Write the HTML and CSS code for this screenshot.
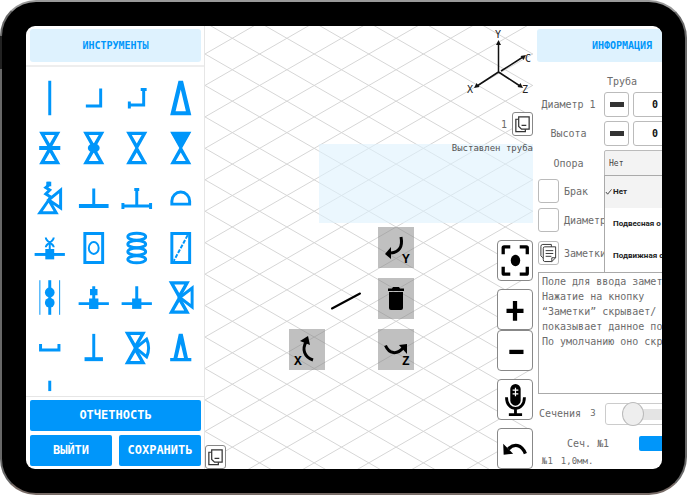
FILE: index.html
```html
<!DOCTYPE html>
<html lang="ru">
<head>
<meta charset="utf-8">
<meta name="viewport" content="width=device-width, initial-scale=1">
<title>Инструменты</title>
<link rel="stylesheet" href="styles.css">
</head>
<body>
<svg class="defs" aria-hidden="true">
  <symbol id="valve" viewBox="-22 -25 44 50"><path class="f" fill-rule="evenodd" d="M-10.7-16.5H10.7L1.5 0L10.7 16.5H-10.7L-1.5 0ZM-5-13.2H5L0-4.5ZM-5 13.2H5L0 4.5Z"/></symbol>
  <symbol id="copy" viewBox="0 0 20 22"><path fill="#fff" stroke="#333" stroke-width="1.3" d="M3 6h10v13H3Z"/><path fill="#fff" stroke="#333" stroke-width="1.3" d="M6 3.5h11v13H9l-3-3ZM9 12.5h5"/></symbol>
</svg>
<div class="device">
<main class="screen">
  <section class="tools">
    <h2 class="title">ИНСТРУМЕНТЫ</h2>
    <div class="palette">
      <button aria-label="Труба"><svg viewBox="-22 -25 44 50"><path class="s" d="M0-17.5V17.5"/></svg></button>
      <button aria-label="Отвод"><svg viewBox="-22 -25 44 50"><path class="s" d="M7-9.5V8H-8"/></svg></button>
      <button aria-label="Отвод с фланцами"><svg viewBox="-22 -25 44 50"><path class="s" d="M7-9.5V7H-9M4-8.5H10M-7.5 3.5V10.5"/></svg></button>
      <button aria-label="Конус"><svg viewBox="-22 -25 44 50"><path class="f" fill-rule="evenodd" d="M-2.3-17.5H2.3L10.7 17.5H-10.7ZM0-8.5L5.2 13.3H-5.2Z"/></svg></button>

      <button aria-label="Задвижка"><svg viewBox="-22 -25 44 50"><use href="#valve" x="-22" y="-25" width="44" height="50"/><path class="s w4" d="M-10.7 0H10.7"/></svg></button>
      <button aria-label="Шаровой кран"><svg viewBox="-22 -25 44 50"><use href="#valve" x="-22" y="-25" width="44" height="50"/><ellipse class="f" rx="6" ry="4.8"/></svg></button>
      <button aria-label="Вентиль"><svg viewBox="-22 -25 44 50"><use href="#valve" x="-22" y="-25" width="44" height="50"/></svg></button>
      <button aria-label="Обратный клапан"><svg viewBox="-22 -25 44 50"><use href="#valve" x="-22" y="-25" width="44" height="50"/><path class="f" d="M-10-16H10L0 1Z"/></svg></button>

      <button aria-label="Предохранительный клапан"><svg viewBox="-22 -25 44 50"><path class="s" d="M-1 2L-10 15H6.5ZM-1 2L11-8V10Z"/><path class="s" d="M-1-16.5V-13L-4-10.500L0-8L-4-4L1-1L-1 2"/><path class="f" d="M-3.5-16.5H1.5V-12H-3.5Z"/></svg></button>
      <button aria-label="Тройник"><svg viewBox="-22 -25 44 50"><path class="s w4" d="M-15 8H15"/><path class="s" d="M0-9.5V8"/></svg></button>
      <button aria-label="Тройник с фланцами"><svg viewBox="-22 -25 44 50"><path class="s" d="M-15 8H15M0-10V8M-2.5-8.5H2.5M-14 5V11M14 5V11"/></svg></button>
      <button aria-label="Заглушка"><svg viewBox="-22 -25 44 50"><path class="s" d="M-9 6.2V3A9 9 0 0 1 9 3V6.2Z"/></svg></button>

      <button aria-label="Врезка"><svg viewBox="-22 -25 44 50"><path class="s" d="M-15.3 6.5H15.3"/><path class="f" d="M-4.5 1H4.5V11.5H-4.5Z"/><path class="s w2" d="M-4-10.7C-4-6 4-5 4-.7M4-10.7C4-6-4-5-4-.7M0-6V2"/></svg></button>
      <button aria-label="Фильтр"><svg viewBox="-22 -25 44 50"><path class="s" d="M-9-14.7H9V14.7H-9Z"/><ellipse class="s w2" rx="5" ry="6"/></svg></button>
      <button aria-label="Компенсатор"><svg viewBox="-22 -25 44 50"><g class="s"><ellipse cy="-11.4" rx="9" ry="3.6"/><ellipse cy="-3.9" rx="9" ry="3.6"/><ellipse cy="3.7" rx="9" ry="3.6"/><ellipse cy="11.4" rx="9" ry="3.6"/></g></svg></button>
      <button aria-label="Сетка"><svg viewBox="-22 -25 44 50"><path class="s" d="M-9-14.7H9V14.7H-9Z"/><path class="s w2" stroke-dasharray="4 1.5" d="M7-13L-7 13"/></svg></button>

      <button aria-label="Диафрагма"><svg viewBox="-22 -25 44 50"><path class="s w1" d="M-10-18V17M10-18V17"/><path class="s" d="M0-18V17"/><circle class="f" cy="-5.6" r="4.9"/><circle class="f" cy="4.8" r="4.9"/></svg></button>
      <button aria-label="Штуцер с бобышкой"><svg viewBox="-22 -25 44 50"><path class="s" d="M-15.3 5.7H15.3M0-12V1"/><path class="f" d="M-4.7 .5H4.7V11H-4.7ZM-3.8-9H3.8V-2.7H-3.8Z"/></svg></button>
      <button aria-label="Штуцер"><svg viewBox="-22 -25 44 50"><path class="s" d="M-15.3 5.7H15.3M0-12V1"/><path class="f" d="M-4.7 .5H4.7V11H-4.7Z"/></svg></button>
      <button aria-label="Трехходовой кран"><svg viewBox="-22 -25 44 50"><use href="#valve" x="-23.5" y="-25.5" width="44" height="50"/><path class="s" d="M-1-.5L11.5-10V9Z"/></svg></button>

      <button aria-label="Опора"><svg viewBox="-22 -25 44 50"><path class="s" d="M-9.3-4V2H9.3V-4"/></svg></button>
      <button aria-label="Стойка"><svg viewBox="-22 -25 44 50"><path class="s" d="M0-14.3V11"/><path class="s w4" d="M-9.3 11.3H9.3"/></svg></button>
      <button aria-label="Регулирующий клапан"><svg viewBox="-22 -25 44 50"><use href="#valve" x="-23.5" y="-25" width="44" height="50"/><path class="s" d="M-1 0L10-9Q14 0 10 9Z"/></svg></button>
      <button aria-label="Конусная опора"><svg viewBox="-22 -25 44 50"><path class="f" fill-rule="evenodd" d="M-2-14.3H2L7.3 10H10.7V13.5H-10.7V10H-7.3ZM0-4L3.3 10H-3.3Z"/></svg></button>

      <button aria-label="Штырь"><svg viewBox="-22 -25 44 50"><path class="s" d="M0-17.5V-7"/></svg></button>
    </div>
    <div class="actions">
      <button class="primary wide">ОТЧЕТНОСТЬ</button>
      <button class="primary">ВЫЙТИ</button>
      <button class="primary">СОХРАНИТЬ</button>
    </div>
  </section>

  <section class="canvas">
    <svg class="mesh" aria-hidden="true">
      <defs>
        <path id="down" d="M0 0l1092 629m-1092-597.550l1092 629m-1092-597.550l1092 629m-1092-597.550l1092 629m-1092-597.550l1092 629m-1092-597.550l1092 629m-1092-597.550l1092 629m-1092-597.550l1092 629"/>
        <path id="up" d="M0 0l1092-629m-1092 660.450l1092-629m-1092 660.450l1092-629m-1092 660.450l1092-629m-1092 660.450l1092-629m-1092 660.450l1092-629m-1092 660.450l1092-629m-1092 660.450l1092-629"/>
      </defs>
      <g fill="none" stroke="#d6d6d6">
        <use href="#down" y="-475.200"/><use href="#down" y="-223.600"/><use href="#down" y="28"/><use href="#down" y="279.600"/><use href="#down" y="531.200"/>
        <use href="#up" y="28"/><use href="#up" y="279.600"/><use href="#up" y="531.200"/><use href="#up" y="782.800"/><use href="#up" y="1034.400"/>
      </g>
    </svg>
    <svg class="pipe" viewBox="0 0 30 18" aria-hidden="true"><path d="M1 16.5L29 1.5" stroke="#000" stroke-width="2" stroke-linecap="round"/></svg>
    <div class="message">Выставлен труба</div>
    <svg class="axes" viewBox="0 0 68 68" aria-hidden="true">
      <path d="M31.500 45V18M31.500 45L10 59M31.500 45L53 59M34 44L56 30" fill="none" stroke="#111" stroke-width="1.5"/>
      <path fill="#111" d="M31.500 13L34 18H29ZM7 61L9.500 56L12.500 60ZM56 61L50.500 60L53.500 56ZM59 28L56.500 33L53.500 29Z"/>
      <g class="axis-text"><text x="28" y="11">Y</text><text x="0" y="66">X</text><text x="55" y="66">Z</text><text x="58" y="35">C</text></g>
    </svg>
    <div class="layer"><span>1</span><button class="small" aria-label="Копировать"><svg viewBox="0 0 20 22"><use href="#copy"/></svg></button></div>

    <button class="node rot-y" aria-label="Повернуть по Y"><svg viewBox="0 0 36 41"><path d="M23 10C25 20 21 25 13 26" fill="none" stroke="#000" stroke-width="3"/><path d="M7 27L13 20V32Z"/><text x="24" y="36">Y</text></svg></button>
    <button class="node bin" aria-label="Удалить"><svg viewBox="0 0 36 41"><path d="M10 10.500H14L15 9H21L22 10.500H26V13H10ZM11 14H25V30Q25 32 23 32H13Q11 32 11 30Z"/></svg></button>
    <button class="node rot-z" aria-label="Повернуть по Z"><svg viewBox="0 0 36 41"><path d="M7.500 16.500C11 25 19 26 25 19" fill="none" stroke="#000" stroke-width="3"/><path d="M21 16L29 15V25Z"/><text x="24" y="36">Z</text></svg></button>
    <button class="node rot-x" aria-label="Повернуть по X"><svg viewBox="0 0 36 41"><path d="M24 31C15 28 13 20 17 13" fill="none" stroke="#000" stroke-width="3"/><path d="M11 12L19 7L21 16Z"/><text x="5" y="36">X</text></svg></button>

    <div class="controls">
      <button aria-label="Центрировать"><svg viewBox="0 0 36 41"><path d="M5.500 14V7Q5.500 6 6.500 6H13M23 6H30Q31 6 31 7V14M31 27V34Q31 35 30 35H23M13 35H6.500Q5.500 35 5.500 34V27" fill="none" stroke="#000" stroke-width="3.500"/><ellipse cx="18.500" cy="20.500" rx="5" ry="6"/></svg></button>
      <div class="zoom">
        <button aria-label="Увеличить"><svg viewBox="0 0 36 41"><path d="M9 22H27M18 11.500V32.500" stroke="#000" stroke-width="4.500"/></svg></button>
        <button aria-label="Уменьшить"><svg viewBox="0 0 36 41"><path d="M12 22H27" stroke="#000" stroke-width="4.500"/></svg></button>
      </div>
      <button aria-label="Голосовой ввод"><svg viewBox="0 0 36 41"><rect x="13" y="4" width="11" height="23" rx="5.500"/><path d="M9 18C9 34 28 34 28 18M18.500 30V36M11.500 36.500H25.500" fill="none" stroke="#000" stroke-width="3"/><path d="M18.500 8V17M15.500 10.500H21.500M15.500 14.500H21.500" stroke="#fff" stroke-width="1.300"/></svg></button>
      <button aria-label="Отменить"><svg viewBox="0 0 36 41"><path d="M29 26C25 16 17 15 11 21" fill="none" stroke="#000" stroke-width="3.500"/><path d="M5.500 15.500L16 26L6 27Z"/></svg></button>
    </div>
    <button class="small corner" aria-label="Дублировать"><svg viewBox="0 0 20 22"><use href="#copy"/></svg></button>
  </section>

  <section class="info">
    <div class="sheet">
      <h2 class="title">ИНФОРМАЦИЯ</h2>
      <h3 class="kind">Труба</h3>
      <div class="row"><label for="dia">Диаметр 1</label><button class="step" aria-label="Меньше диаметр"></button><input class="num" id="dia" value="0"></div>
      <div class="row"><label for="hgt">Высота</label><button class="step" aria-label="Меньше высота"></button><input class="num" id="hgt" value="0"></div>
      <div class="row"><label for="sup">Опора</label>
        <div class="dropdown">
          <select id="sup"><option>Нет</option><option>Подвесная о</option><option>Подвижная о</option></select>
          <ul class="menu"><li class="on"><svg viewBox="0 0 8 8" aria-hidden="true"><path d="M1 4L3 6.500L7.500 1" fill="none" stroke="#333"/></svg>Нет</li><li>Подвесная о</li><li>Подвижная о</li></ul>
        </div>
      </div>
      <div class="check"><input type="checkbox" id="brak"><label for="brak">Брак</label></div>
      <div class="check"><input type="checkbox" id="d2"><label for="d2">Диаметр</label></div>
      <div class="check notes"><button id="nb" class="small" aria-label="Заметки"><svg viewBox="0 0 20 22"><path fill="#fff" stroke="#333" d="M2 14V4Q2 2 4 2H13V16H4Z"/><path fill="#fff" stroke="#333" d="M4.500 16V6Q4.500 4.500 6 4.500H17.500V16L13.500 20H6Q4.500 20 4.500 18ZM17.500 16H13.500V20M7 8.500H15M7 11.500H15M7 14.500H13"/></svg></button><label for="nb">Заметки</label></div>
      <textarea aria-label="Текст заметки">Поле для ввода заметок.
Нажатие на кнопку
“Заметки” скрывает/
показывает данное поле.
По умолчанию оно скрыто.</textarea>
      <div class="sections"><label for="sec">Сечения</label><output for="sec">3</output><input type="range" id="sec" min="0" max="14" value="3"></div>
      <div class="section-row"><span>Сеч. №1</span><button class="blue" aria-label="Изменить сечение"></button></div>
      <div class="size"><span>№1</span><span>1,0мм.</span></div>
    </div>
  </section>
</main>
</div>
</body>
</html>
```
FILE: styles.css
```css
* { box-sizing: border-box; }

body {
  margin: 0;
  background: #fff;
  color: #6c6c6c;
  font: 10px/15px "DejaVu Sans Mono", "Liberation Mono", monospace;
}

button, input, select, textarea { font: inherit; color: inherit; margin: 0; }
button { padding: 0; border: 0; background: none; display: block; }
button svg { display: block; width: 100%; height: 100%; }
h2, h3, ul { margin: 0; padding: 0; font: inherit; list-style: none; }
.defs { position: absolute; width: 0; height: 0; }

.device {
  position: relative;
  height: 100vh;
  padding: 24px 23px 24px 24px;
  background: #000;
  border: 2px solid #777;
  border-color: #999 #686868 #776b66 #686868;
  border-radius: 36px 38px 38px 36px;
}
/* side key */
.device::before {
  content: "";
  position: absolute;
  left: -2px;
  top: 34px;
  width: 2px;
  height: 33px;
  background: #222;
}

.screen {
  display: grid;
  grid-template-columns: 179px 1fr 129px;
  height: 100%;
  overflow: hidden;
  border-radius: 9px;
  background: #fff;
}

.title {
  height: 33px;
  border-radius: 3px;
  background: #def2fe;
  color: #0096fa;
  font-weight: 700;
  line-height: 33px;
  text-align: center;
}

/* Left panel */
.tools {
  display: flex;
  flex-direction: column;
  min-height: 0;
  border-right: 1px solid #e6e6e6;
}
.tools .title { margin: 3px 3px 3px 4px; flex: none; }
.palette {
  flex: 1;
  min-height: 0;
  overflow: hidden;
  display: grid;
  grid-template-columns: repeat(4, 1fr);
  grid-auto-rows: 50px;
  padding: 6px 2px 0;
  border-top: 2px solid #eee;
  border-bottom: 1px solid #e6e6e6;
}
.f { fill: #0096fa; }
.s { fill: none; stroke: #0096fa; stroke-width: 3; }
.w4 { stroke-width: 4; }
.w2 { stroke-width: 2; }
.w1 { stroke-width: 1; }

.actions {
  display: grid;
  grid-template-columns: 1fr 1fr;
  gap: 4px 7px;
  padding: 3px 3px 3px 4px;
}
.primary {
  height: 31px;
  border-radius: 2px;
  background: #0096fa;
  color: #fff;
  font-size: 12px;
  font-weight: 700;
}
.wide { grid-column: 1 / -1; }

/* Drawing area */
.canvas { position: relative; overflow: hidden; }
.mesh { position: absolute; inset: 0; width: 100%; height: 100%; }
.message {
  position: absolute;
  top: 118px;
  right: 0;
  width: 214px;
  height: 79px;
  background: rgba(222, 242, 254, .6);
  line-height: 8px;
  text-align: right;
  font-size: 9px;
  color: #555;
}
.axes { position: absolute; top: 1px; right: -2px; width: 68px; height: 68px; overflow: visible; }
.axis-text { font-size: 10px; fill: #222; }
.layer {
  position: absolute;
  top: 86px;
  right: 0;
  display: flex;
  align-items: center;
  gap: 5px;
}
.small {
  width: 21px;
  height: 24px;
  border: 1px solid #888;
  border-radius: 3px;
  background: #fff;
}
.corner { position: absolute; left: 0; bottom: 0; }
.node {
  position: absolute;
  width: 36px;
  height: 41px;
  background: rgba(130, 130, 130, .5);
}
.node text { font: 700 13px "Liberation Mono", monospace; }
.rot-y { left: 173px; top: 201px; }
.bin { left: 173px; top: 252px; }
.rot-z { left: 173px; top: 303px; }
.rot-x { left: 84px; top: 303px; }
.pipe { position: absolute; left: 126px; top: 266px; width: 30px; height: 18px; }
.controls {
  position: absolute;
  top: 214px;
  right: 0;
  width: 36px;
  display: grid;
  gap: 8px;
}
.controls button {
  width: 36px;
  height: 41px;
  border: 1px solid #888;
  border-radius: 4px;
  background: #fff;
}

/* Right panel */
.info { overflow: hidden; }
.sheet { width: 178px; padding: 3px 4px; }
.kind { margin: 12px 0 3px; text-align: center; }
.row {
  display: grid;
  grid-template-columns: 63px 25px 1fr;
  column-gap: 4px;
  align-items: center;
  height: 25px;
  margin-bottom: 4px;
}
.row label { text-align: center; white-space: nowrap; }
.step, .num {
  height: 25px;
  border: 1px solid #bbb;
  border-radius: 3px;
  background: #fff;
}
.step { display: grid; place-items: center; }
.step::before { content: ""; width: 14px; height: 5px; background: #333; }
.num { width: 44px; padding: 0; text-align: center; color: #111; font-weight: 700; }
.dropdown { position: relative; grid-column: 2 / -1; }
.dropdown select {
  display: block;
  width: 100%;
  height: 26px;
  padding: 0 4px;
  border: 1px solid #bbb;
  border-radius: 2px 2px 0 0;
  background: #f3f3f3;
  appearance: none;
  color: #444;
  font-size: 8px;
}
.menu {
  position: absolute;
  z-index: 2;
  top: 25px;
  left: 0;
  width: 100%;
  border: 1px solid #aaa;
  background: #fff;
  color: #222;
  font: 700 8px/32px Roboto, sans-serif;
  white-space: nowrap;
}
.menu li { position: relative; height: 32px; padding-left: 8px; }
.menu .on { background: #f3f3f3; }
.menu svg { position: absolute; left: 0; top: 12px; width: 7px; height: 8px; }
.check { display: flex; align-items: center; gap: 5px; margin: 0 1px 5px; height: 24px; }
.check input {
  appearance: none;
  width: 21px;
  height: 24px;
  border: 1px solid #bbb;
  border-radius: 3px;
  background: #fff;
}
.check .small { border-color: #bbb; }
.notes { margin-top: 9px; }
textarea {
  display: block;
  width: 169px;
  height: 122px;
  margin: 7px 1px 0;
  padding: 1px 3px;
  border: 1px solid #aaa;
  overflow: hidden;
  resize: none;
  white-space: pre;
}
.sections { display: flex; align-items: center; height: 25px; margin: 7px 2px 0; }
.sections output { width: 24px; text-align: center; font-size: 9px; }
.sections input {
  appearance: none;
  width: 100px;
  height: 22px;
  border: 1px solid #ccc;
  border-radius: 3px;
  background: linear-gradient(#e4e4e4, #e4e4e4) 36px 5px / 64px 11px no-repeat #fff;
}
.sections input::-webkit-slider-thumb {
  appearance: none;
  width: 22px;
  height: 24px;
  border: 1px solid #bbb;
  border-radius: 50%;
  background: #eee;
}
.section-row { display: flex; align-items: center; margin-top: 9px; height: 16px; }
.section-row span { width: 102px; text-align: center; }
.blue { width: 68px; height: 15px; border-radius: 2px; background: #0096fa; }
.size { display: flex; gap: 8px; margin: 3px 5px 0; font-size: 9px; }
```
